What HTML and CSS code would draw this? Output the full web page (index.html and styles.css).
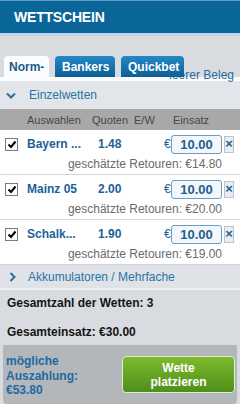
FILE: index.html
```html
<!DOCTYPE html>
<html lang="de">
<head>
<meta charset="utf-8">
<title>Wettschein</title>
<link rel="stylesheet" href="styles.css">
</head>
<body>
<div class="slip">
  <header class="head"><h1>WETTSCHEIN</h1></header>
  <div class="tabbar">
    <div class="tabs">
      <span class="tab active">Norm-</span>
      <span class="tab">Bankers</span>
      <span class="tab">Quickbet</span>
    </div>
    <a class="clear">leerer Beleg</a>
  </div>
  <div class="section">
    <svg class="chev" width="10" height="7" viewBox="0 0 10 7"><path d="M1 1.5 L5 5.5 L9 1.5" fill="none" stroke="#2a6ea3" stroke-width="2"/></svg>
    <span>Einzelwetten</span>
  </div>
  <div class="cols">
    <span></span><span>Auswahlen</span><span>Quoten</span><span>E/W</span><span>Einsatz</span>
  </div>

  <div class="bet">
    <div class="main">
      <span class="cb"><svg width="10" height="9" viewBox="0 0 10 9"><path d="M1.5 4.5 L4 7 L8.5 1.5" fill="none" stroke="#000" stroke-width="2"/></svg></span>
      <span class="name">Bayern ...</span>
      <span class="odds">1.48</span>
      <span class="eur">€</span>
      <span class="stake">10.00</span>
      <span class="del">×</span>
    </div>
    <div class="ret">geschätzte Retouren: €14.80</div>
  </div>
  <div class="bet">
    <div class="main">
      <span class="cb"><svg width="10" height="9" viewBox="0 0 10 9"><path d="M1.5 4.5 L4 7 L8.5 1.5" fill="none" stroke="#000" stroke-width="2"/></svg></span>
      <span class="name">Mainz 05</span>
      <span class="odds">2.00</span>
      <span class="eur">€</span>
      <span class="stake">10.00</span>
      <span class="del">×</span>
    </div>
    <div class="ret">geschätzte Retouren: €20.00</div>
  </div>
  <div class="bet">
    <div class="main">
      <span class="cb"><svg width="10" height="9" viewBox="0 0 10 9"><path d="M1.5 4.5 L4 7 L8.5 1.5" fill="none" stroke="#000" stroke-width="2"/></svg></span>
      <span class="name">Schalk...</span>
      <span class="odds">1.90</span>
      <span class="eur">€</span>
      <span class="stake">10.00</span>
      <span class="del">×</span>
    </div>
    <div class="ret">geschätzte Retouren: €19.00</div>
  </div>

  <div class="section acc">
    <svg class="chev" width="7" height="10" viewBox="0 0 7 10"><path d="M1.5 1 L5.5 5 L1.5 9" fill="none" stroke="#2a6ea3" stroke-width="2"/></svg>
    <span>Akkumulatoren / Mehrfache</span>
  </div>

  <div class="summary">
    <p>Gesamtzahl der Wetten: 3</p>
    <p>Gesamteinsatz: €30.00</p>
  </div>

  <div class="payout">
    <div class="pay-text">mögliche<br>Auszahlung:<br>€53.80</div>
    <button class="place">Wette<br>platzieren</button>
  </div>
</div>
</body>
</html>
```
FILE: styles.css
```css
* { box-sizing: border-box; }
html, body { margin: 0; padding: 0; background: #fff; }
body { font-family: "Liberation Sans", Arial, sans-serif; font-size: 12px; }

.slip { width: 240px; background: #d8dce1; }

.head {
  height: 36px;
  background: #0a6599;
  border-top: 1px solid #5e9ec6;
  border-bottom: 3px solid #bcd5e7;
  padding-left: 14px;
  display: flex;
  align-items: center;
}
.head h1 { margin: 0; color: #fff; font-size: 14px; font-weight: bold; letter-spacing: -0.2px; }

.tabbar {
  position: relative;
  padding: 20px 0 0 4px;
  border-bottom: 4px solid #fbfcfd;
}
.tabs { display: flex; gap: 6px; position: relative; z-index: 1; }
.tab {
  height: 21px;
  padding: 0 7px;
  display: flex;
  align-items: center;
  font-weight: bold;
  color: #fff;
  border-radius: 4px 4px 0 0;
  background: linear-gradient(#2588c8, #0d5e94);
}
.tab:nth-child(1) { width: 45px; padding: 0 5px; }
.tab:nth-child(2) { width: 60px; }
.tab:nth-child(3) { width: 63px; }
.tab.active { background: #fbfcfd; color: #1b5b89; }
.clear {
  position: absolute;
  right: 6px;
  bottom: -5px;
  z-index: 0;
  color: #2a6a9c;
  font-size: 12px;
  line-height: 14px;
}

.section {
  height: 28px;
  background: #e2e5e9;
  display: flex;
  align-items: center;
  color: #2b74a8;
  font-size: 12px;
}
.section .chev { margin: 0 13px 0 6px; }
.section.acc { height: 25px; background: #dfe2e6; border-bottom: 2px solid #eef0f2; }
.section.acc .chev { margin: 0 12px 0 9px; }

.cols {
  height: 21px;
  background: #a8a8a8;
  display: grid;
  grid-template-columns: 27px 65px 42px 39px 1fr;
  align-items: center;
  color: #474747;
  font-size: 11px;
}

.bet {
  background: #fff;
  padding-top: 4px;
  border-bottom: 1px solid #d4d4d4;
}
.main {
  height: 20px;
  display: grid;
  grid-template-columns: 27px 70px 67px 7px 51px 12px;
  align-items: center;
}
.cb {
  margin-left: 5px;
  width: 13px;
  height: 13px;
  border: 1px solid #7a7a7a;
  background: #fff;
  display: flex;
  align-items: center;
  justify-content: center;
}
.name, .odds { color: #1d6198; font-weight: bold; font-size: 12px; }
.odds { padding-left: 1px; }
.eur { color: #1d6198; font-size: 12px; }
.stake {
  height: 19px;
  border: 1px solid #6b9ec4;
  border-radius: 3px;
  background: #f3f7fa;
  color: #1d5f90;
  font-weight: bold;
  font-size: 13px;
  display: flex;
  align-items: center;
  justify-content: center;
}
.del {
  margin-left: 2px;
  width: 10px;
  height: 17px;
  border: 1px solid #b8c4cf;
  background: #e9eef3;
  color: #1d5f90;
  font-weight: bold;
  font-size: 13px;
  line-height: 14px;
  display: flex;
  align-items: center;
  justify-content: center;
}
.ret {
  height: 20px;
  line-height: 20px;
  text-align: right;
  padding-right: 18px;
  color: #6b6b6b;
  font-size: 12px;
}

.summary { padding: 3px 0 3px 7px; }
.summary p { margin: 0; line-height: 20px; font-weight: bold; color: #141414; font-size: 12px; }
.summary p + p { margin-top: 9px; }

.payout {
  margin: 0 3px;
  height: 59px;
  background: #b3b6bb;
  border-radius: 0 0 4px 4px;
  display: flex;
  align-items: center;
  justify-content: space-between;
  padding: 0 2px 0 3px;
}
.pay-text { color: #1e6aa0; font-weight: bold; font-size: 12px; line-height: 14.5px; margin-top: 3px; }
.place {
  width: 113px;
  height: 37px;
  border: 1px solid #dcefc6;
  border-radius: 4px;
  background: linear-gradient(#7fbb2e, #4f8e1c);
  color: #fff;
  font-family: "Liberation Sans", Arial, sans-serif;
  font-weight: bold;
  font-size: 12px;
  line-height: 14px;
  padding: 0;
}
```
